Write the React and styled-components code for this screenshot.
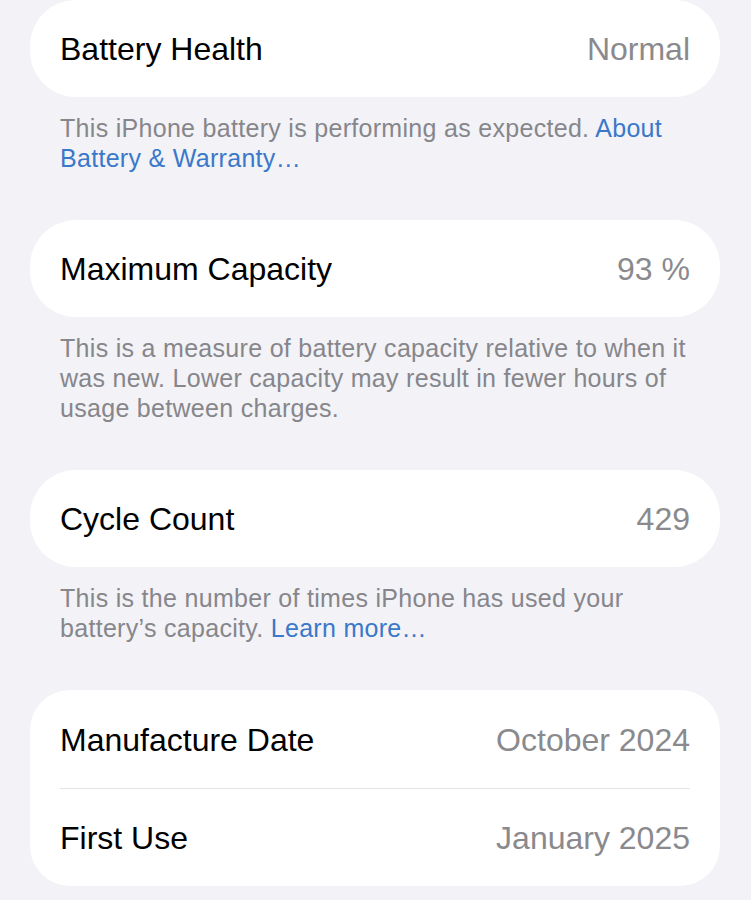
import React from "react";
import styled, { createGlobalStyle } from "styled-components";

const Global = createGlobalStyle`
  html, body { margin: 0; padding: 0; background: #f2f2f7; }
  body { font-family: "Liberation Sans", Arial, sans-serif; -webkit-font-smoothing: antialiased; }
`;

const Page = styled.div`
  width: 751px;
  min-height: 900px;
  box-sizing: border-box;
  padding: 0 31px 0 30px;
  background: #f2f2f7;
  overflow: hidden;
`;

const Card = styled.div`
  background: #ffffff;
  border-radius: ${(p) => (p.$multi ? "40px" : "46px")};
  padding: 0 30px;
  display: flex;
  flex-direction: column;
`;

const Row = styled.div`
  height: ${(p) => p.$h || 97}px;
  display: flex;
  align-items: center;
  justify-content: space-between;
  font-size: 32px;
  box-sizing: border-box;
  border-top: ${(p) => (p.$divider ? "1.5px solid #e3e3e8" : "none")};
`;

const Label = styled.span`
  color: #000;
  padding-top: 2px;
`;

const Value = styled.span`
  color: #8a8a8e;
  padding-top: 2px;
`;

const Footer = styled.p`
  margin: 0;
  padding: 16px 30px 47px;
  font-size: 25px;
  letter-spacing: 0.3px;
  line-height: 30px;
  color: #86868b;
`;

const Link = styled.a`
  color: #3a78c9;
  text-decoration: none;
`;

export default function App() {
  return (
    <>
      <Global />
      <Page>
        <Card>
          <Row>
            <Label>Battery Health</Label>
            <Value>Normal</Value>
          </Row>
        </Card>
        <Footer>
          This iPhone battery is performing as expected. <Link>About Battery &amp; Warranty…</Link>
        </Footer>
        <Card>
          <Row>
            <Label>Maximum Capacity</Label>
            <Value>93 %</Value>
          </Row>
        </Card>
        <Footer>
          This is a measure of battery capacity relative to when it was new. Lower capacity may result in fewer hours of usage between charges.
        </Footer>
        <Card>
          <Row>
            <Label>Cycle Count</Label>
            <Value>429</Value>
          </Row>
        </Card>
        <Footer>
          This is the number of times iPhone has used your battery’s capacity. <Link>Learn more…</Link>
        </Footer>
        <Card $multi>
          <Row $h={98}>
            <Label>Manufacture Date</Label>
            <Value>October 2024</Value>
          </Row>
          <Row $h={98} $divider>
            <Label>First Use</Label>
            <Value>January 2025</Value>
          </Row>
        </Card>
      </Page>
    </>
  );
}
